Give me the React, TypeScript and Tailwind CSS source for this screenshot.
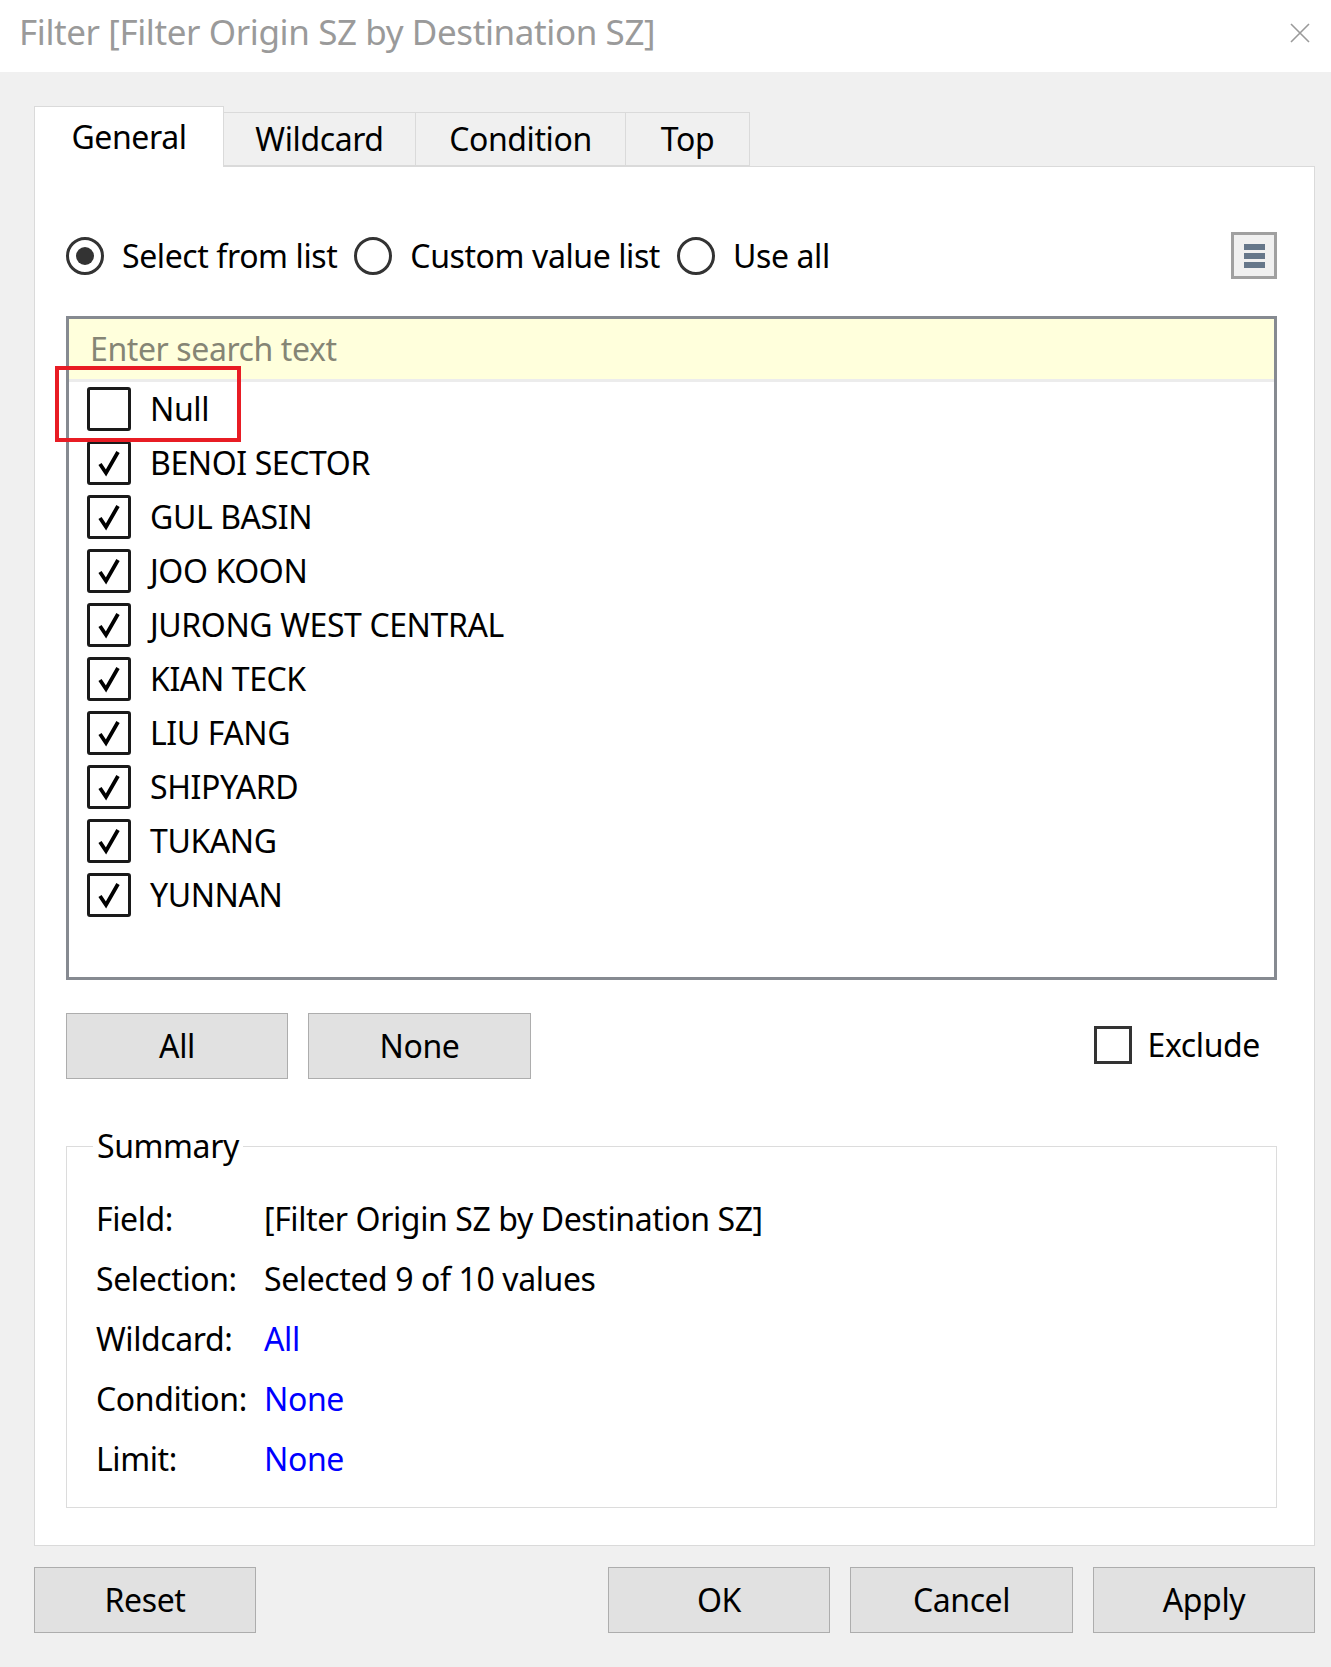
import React from "react";

function CheckBox({ checked, size = 44 }: { checked: boolean; size?: number }) {
  return (
    <div
      className="border-[3px] border-[#1a1a1a] rounded-[3px] bg-white flex items-center justify-center shrink-0"
      style={{ width: size, height: size }}
    >
      {checked && (
        <svg width="32" height="32" viewBox="0 0 32 32">
          <path d="M7 17 L13 26 L25 5" stroke="#000" strokeWidth="3.8" fill="none" strokeLinecap="butt" strokeLinejoin="miter" />
        </svg>
      )}
    </div>
  );
}

function Radio({ checked }: { checked: boolean }) {
  return (
    <div className="w-[38px] h-[38px] rounded-full border-[3px] border-[#333] bg-white flex items-center justify-center shrink-0">
      {checked && <div className="w-[18px] h-[18px] rounded-full bg-[#333]" />}
    </div>
  );
}

const items: { label: string; checked: boolean }[] = [
  { label: "Null", checked: false },
  { label: "BENOI SECTOR", checked: true },
  { label: "GUL BASIN", checked: true },
  { label: "JOO KOON", checked: true },
  { label: "JURONG WEST CENTRAL", checked: true },
  { label: "KIAN TECK", checked: true },
  { label: "LIU FANG", checked: true },
  { label: "SHIPYARD", checked: true },
  { label: "TUKANG", checked: true },
  { label: "YUNNAN", checked: true },
];

const summary: { label: string; value: string; link?: boolean }[] = [
  { label: "Field:", value: "[Filter Origin SZ by Destination SZ]" },
  { label: "Selection:", value: "Selected 9 of 10 values" },
  { label: "Wildcard:", value: "All", link: true },
  { label: "Condition:", value: "None", link: true },
  { label: "Limit:", value: "None", link: true },
];

export default function App() {
  return (
    <div className="w-[1331px] h-[1667px] bg-[#f0f0f0] flex flex-col font-['Noto_Sans',sans-serif] text-[32px] tracking-[-0.4px] text-black leading-normal overflow-hidden">
      {/* Title bar */}
      <div className="h-[72px] bg-white flex items-center justify-between pl-[19px] pr-[21px] pb-[8px] shrink-0">
        <span className="text-[35px] text-[#9a9a9a] tracking-[-0.4px]">Filter [Filter Origin SZ by Destination SZ]</span>
        <svg width="20" height="20" viewBox="0 0 20 20" className="mt-[2px]">
          <path d="M1 1 L19 19 M19 1 L1 19" stroke="#9a9a9a" strokeWidth="1.6" />
        </svg>
      </div>

      {/* Body */}
      <div className="flex flex-col pl-[34px] pr-[16px] pt-[33px]">
        {/* Tabs */}
        <div className="flex items-end h-[61px]">
          <div className="relative z-10 w-[190px] h-[61px] -mb-px bg-white border border-b-0 border-[#dadada] flex items-center justify-center">
            General
          </div>
          <div className="w-[192px] h-[54px] bg-[#f0f0f0] border-y border-r border-[#dadada] flex items-center justify-center">
            Wildcard
          </div>
          <div className="w-[210px] h-[54px] bg-[#f0f0f0] border-y border-r border-[#dadada] flex items-center justify-center">
            Condition
          </div>
          <div className="w-[124px] h-[54px] bg-[#f0f0f0] border-y border-r border-[#dadada] flex items-center justify-center">
            Top
          </div>
        </div>

        {/* Panel */}
        <div className="bg-white border border-[#dadada] h-[1380px] flex flex-col pl-[31px] pr-[37px] pt-[65px]">
          {/* Radio row */}
          <div className="h-[47px] flex items-center justify-between">
            <div className="flex items-center">
              <Radio checked />
              <span className="ml-[18px] mr-[17px]">Select from list</span>
              <Radio checked={false} />
              <span className="ml-[18px] mr-[17px]">Custom value list</span>
              <Radio checked={false} />
              <span className="ml-[18px]">Use all</span>
            </div>
            <div className="w-[46px] h-[47px] border-[3px] border-[#a0a0a0] bg-[#f0f0f0] flex flex-col items-center justify-center gap-[3px]">
              <div className="w-[21px] h-[6px] bg-[#66778a]" />
              <div className="w-[21px] h-[6px] bg-[#66778a]" />
              <div className="w-[21px] h-[6px] bg-[#66778a]" />
            </div>
          </div>

          {/* List box */}
          <div className="mt-[37px] h-[664px] border-[3px] border-[#868a91] flex flex-col">
            <div className="h-[60px] bg-[#ffffdc] flex items-center pl-[21px] text-[#858575] shrink-0">
              Enter search text
            </div>
            <div className="h-[3px] bg-[#ececec] shrink-0" />
            <div className="relative flex flex-col pl-[18px]">
              {items.map((it) => (
                <div key={it.label} className="h-[54px] flex items-center gap-[19px]">
                  <CheckBox checked={it.checked} />
                  <span>{it.label}</span>
                </div>
              ))}
              <div className="absolute left-[-14px] top-[-16px] w-[186px] h-[76px] border-[4px] border-[#e81c24]" />
            </div>
          </div>

          {/* Buttons row */}
          <div className="mt-[33px] h-[66px] flex items-center">
            <div className="w-[222px] h-[66px] bg-[#e1e1e1] border border-[#adadad] flex items-center justify-center">All</div>
            <div className="ml-[20px] w-[223px] h-[66px] bg-[#e1e1e1] border border-[#adadad] flex items-center justify-center">None</div>
            <div className="ml-auto mr-[17px] flex items-center gap-[16px] mt-[-2px]">
              <div className="w-[38px] h-[38px] border-[3px] border-[#333] bg-white" />
              <span>Exclude</span>
            </div>
          </div>

          {/* Summary */}
          <fieldset className="mt-[43px] border border-[#dcdcdc] pt-[19px] pb-[18px]">
            <legend className="ml-[26px] px-[4px]">Summary</legend>
            {summary.map((s) => (
              <div key={s.label} className="h-[60px] flex items-center pl-[29px]">
                <span className="w-[168px] shrink-0">{s.label}</span>
                <span className={s.link ? "text-[#0000ff]" : ""}>{s.value}</span>
              </div>
            ))}
          </fieldset>
        </div>

        {/* Bottom buttons */}
        <div className="mt-[21px] h-[66px] flex items-center">
          <div className="w-[222px] h-[66px] bg-[#e1e1e1] border border-[#adadad] flex items-center justify-center">Reset</div>
          <div className="ml-auto w-[222px] h-[66px] bg-[#e1e1e1] border border-[#adadad] flex items-center justify-center">OK</div>
          <div className="ml-[20px] w-[223px] h-[66px] bg-[#e1e1e1] border border-[#adadad] flex items-center justify-center">Cancel</div>
          <div className="ml-[20px] w-[222px] h-[66px] bg-[#e1e1e1] border border-[#adadad] flex items-center justify-center">Apply</div>
        </div>
      </div>
    </div>
  );
}
